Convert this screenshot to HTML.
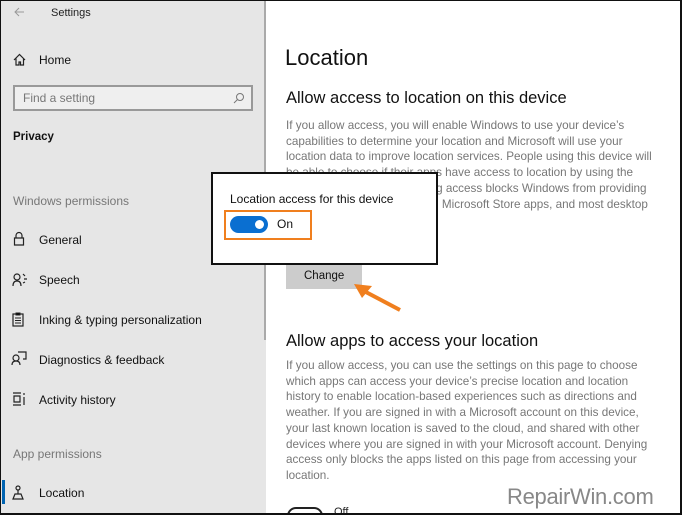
<!DOCTYPE html>
<html><head><meta charset="utf-8"><style>
*{margin:0;padding:0;box-sizing:border-box}
html,body{width:682px;height:515px;overflow:hidden}
body{background:#fff;font-family:"Liberation Sans",sans-serif;position:relative}
.a{position:absolute;white-space:nowrap}
#side{position:absolute;left:0;top:0;width:266px;height:515px;background:#e6e6e6}
.nav{font-size:12px;color:#111}
.muted{font-size:12px;color:#777}
.p{position:absolute;left:286px;font-size:11.7px;color:#777;line-height:15.7px;white-space:nowrap}
</style></head><body>
<div id="side"></div>
<div class="a" style="left:264px;top:0;width:2px;height:340px;background:#aaa"></div>
<svg class="a" style="left:13px;top:7px" width="12" height="10"><path d="M11 5H2M6 1L2 5l4 4" stroke="#999" fill="none" stroke-width="1"/></svg>
<div class="a" style="left:51px;top:7px;font-size:11px;color:#222">Settings</div>
<svg class="a" style="left:13px;top:53px" width="13" height="13"><path d="M1 7L6.5 1.5 12 7M3 5.5V12h3V9h1.5v3h3V5.5" stroke="#222" fill="none" stroke-width="1.2"/></svg>
<div class="a nav" style="left:39px;top:53px">Home</div>
<div class="a" style="left:13px;top:85px;width:240px;height:26px;border:2px solid #999;background:#efefef"></div>
<div class="a muted" style="left:23px;top:91px;color:#777">Find a setting</div>
<svg class="a" style="left:233px;top:92px" width="12" height="12"><circle cx="7" cy="5" r="3.5" stroke="#777" fill="none"/><path d="M4.5 7.5L1 11" stroke="#777"/></svg>
<div class="a" style="left:13px;top:131px;font-size:11.5px;font-weight:bold;color:#111">Privacy</div>
<div class="a muted" style="left:13px;top:194px">Windows permissions</div>
<svg class="a" style="left:13px;top:231px" width="12" height="15"><path d="M3 7V4.5a3 3 0 0 1 6 0V7M1.5 7h9v7h-9z" stroke="#222" fill="none" stroke-width="1.2"/></svg>
<div class="a nav" style="left:39px;top:233px">General</div>
<svg class="a" style="left:12px;top:272px" width="16" height="15"><circle cx="5" cy="5" r="3" stroke="#222" fill="none" stroke-width="1.2"/><path d="M1 14c0-4 2-5 4-5s4 1 4 5M11 2l2 2M12 7h3M11 11l2-1" stroke="#222" fill="none" stroke-width="1.2"/></svg>
<div class="a nav" style="left:39px;top:273px">Speech</div>
<svg class="a" style="left:12px;top:312px" width="12" height="15"><rect x="1" y="2" width="10" height="12" stroke="#222" fill="none" stroke-width="1.2"/><path d="M4 1h4v2H4zM3 6h6M3 8.5h6M3 11h6" stroke="#222" stroke-width="1"/></svg>
<div class="a nav" style="left:39px;top:313px">Inking &amp; typing personalization</div>
<svg class="a" style="left:11px;top:351px" width="16" height="15"><circle cx="5" cy="7" r="3" stroke="#222" fill="none" stroke-width="1.2"/><path d="M1 14c0-3 2-4 4-4s4 1 4 4M7 1h8v7h-3" stroke="#222" fill="none" stroke-width="1.2"/></svg>
<div class="a nav" style="left:39px;top:353px">Diagnostics &amp; feedback</div>
<svg class="a" style="left:12px;top:392px" width="14" height="14"><path d="M1 1h8M1 13h8M2 4h6v6H2zM12 1v2M12 5v8" stroke="#222" fill="none" stroke-width="1.2"/></svg>
<div class="a nav" style="left:39px;top:393px">Activity history</div>
<div class="a muted" style="left:13px;top:447px">App permissions</div>
<div class="a" style="left:2px;top:480px;width:3px;height:24px;background:#0063b1"></div>
<svg class="a" style="left:11px;top:485px" width="14" height="15"><circle cx="7" cy="3" r="2" stroke="#222" fill="none" stroke-width="1.2"/><path d="M7 5v4M2 14l2-5h6l2 5z" stroke="#222" fill="none" stroke-width="1.2"/></svg>
<div class="a nav" style="left:39px;top:486px">Location</div>
<div class="a" style="left:285px;top:45px;font-size:22px;color:#111">Location</div>
<div class="a" style="left:286px;top:89px;font-size:16.5px;color:#111">Allow access to location on this device</div>
<div class="p" style="top:118px">If you allow access, you will enable Windows to use your device’s<br>capabilities to determine your location and Microsoft will use your<br>location data to improve location services. People using this device will<br>be able to choose if their apps have access to location by using the<br>settings on this page. Denying access blocks Windows from providing<br>location to Windows features, Microsoft Store apps, and most desktop<br>apps.</div>
<div class="a" style="left:286px;top:263px;width:76px;height:26px;background:#ccc"></div>
<div class="a" style="left:304px;top:270px;font-size:11.5px;color:#111">Change</div>
<svg class="a" style="left:348px;top:280px" width="56" height="34"><path d="M52 30L14 10" stroke="#f07f1e" stroke-width="4"/><path d="M6 4L24 6 14 18z" fill="#f07f1e"/></svg>
<div class="a" style="left:286px;top:332px;font-size:16.5px;color:#111">Allow apps to access your location</div>
<div class="p" style="top:358px">If you allow access, you can use the settings on this page to choose<br>which apps can access your device’s precise location and location<br>history to enable location-based experiences such as directions and<br>weather. If you are signed in with a Microsoft account on this device,<br>your last known location is saved to the cloud, and shared with other<br>devices where you are signed in with your Microsoft account. Denying<br>access only blocks the apps listed on this page from accessing your<br>location.</div>
<div class="a" style="left:287px;top:507px;width:36px;height:18px;border:2px solid #222;border-radius:9px"></div>
<div class="a" style="left:334px;top:506px;font-size:11px;color:#222">Off</div>
<div class="a" style="left:507px;top:484px;font-size:22px;color:#888;letter-spacing:-0.3px">RepairWin.com</div>
<div class="a" style="left:211px;top:172px;width:227px;height:93px;background:#fff;border:2px solid #111"></div>
<div class="a" style="left:230px;top:192px;font-size:12px;color:#111">Location access for this device</div>
<div class="a" style="left:224px;top:210px;width:88px;height:30px;border:2px solid #f07f1e"></div>
<div class="a" style="left:230px;top:216px;width:38px;height:17px;background:#0a6fd1;border-radius:9px"></div>
<div class="a" style="left:255px;top:220px;width:9px;height:9px;background:#fff;border-radius:50%"></div>
<div class="a" style="left:277px;top:217px;font-size:12px;color:#111">On</div>
<div class="a" style="left:0;top:0;width:682px;height:515px;border:1px solid #111;border-right-width:2px;border-bottom-width:2px"></div>
</body></html>
